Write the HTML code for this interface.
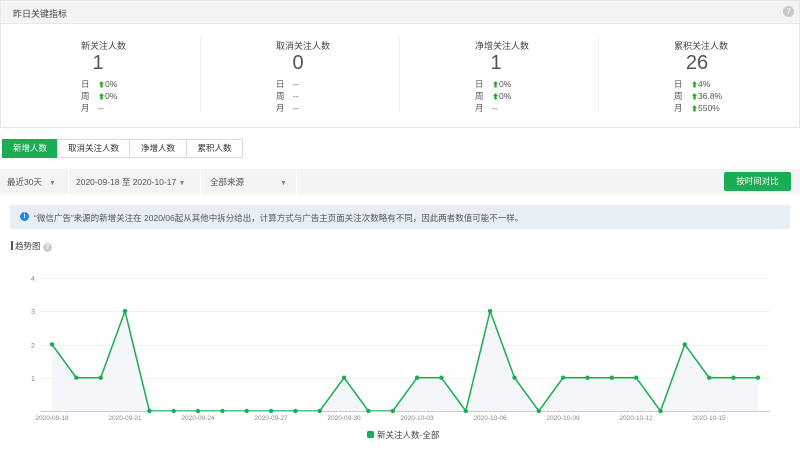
<!DOCTYPE html>
<html><head><meta charset="utf-8"><style>
*{margin:0;padding:0;box-sizing:border-box}
body{width:800px;height:469px;overflow:hidden;background:#fff;font-family:"Liberation Sans","Noto Sans CJK SC",sans-serif;color:#333;position:relative;font-size:9px}
.a{position:absolute}
.hd{left:0;top:0;width:800px;height:24px;background:#f3f4f6;border:1px solid #e7e8eb}
.cards{left:0;top:24px;width:800px;height:104px;border:1px solid #e7e8eb;border-top:none}
.dv{width:1px;height:76px;top:37px;background:#eee}
.t{font-size:9px;color:#444}
.n{font-size:20px;color:#555;text-align:center;width:30px}
.r{font-size:8.5px;color:#555}
.r div{height:12px;line-height:12px;white-space:nowrap}
.r b{display:inline-block;width:17px;font-weight:normal}
.g{color:#1aad19;font-size:7px;line-height:12px}
.tab{top:139px;height:19px;border:1px solid #ddd;font-size:8.5px;line-height:17px;text-align:center;background:#fff}
</style></head><body>
<div class="a hd"></div>
<div class="a t" style="left:13px;top:7px">昨日关键指标</div>
<div class="a" style="left:783px;top:6px;width:11px;height:11px;border-radius:50%;background:#c8c8c8;color:#fff;font-size:8px;text-align:center;line-height:11px">?</div>
<div class="a cards"></div>
<div class="a dv" style="left:200px"></div><div class="a dv" style="left:399px"></div><div class="a dv" style="left:598px"></div>

<div class="a t" style="left:81px;top:39px">新关注人数</div><div class="a n" style="left:83px;top:52px">1</div>
<div class="a r" style="left:81px;top:78px"><div><b>日</b><span class="g">⬆</span>0%</div><div><b>周</b><span class="g">⬆</span>0%</div><div><b>月</b>--</div></div>
<div class="a t" style="left:276px;top:39px">取消关注人数</div><div class="a n" style="left:283px;top:52px">0</div>
<div class="a r" style="left:276px;top:78px"><div><b>日</b>--</div><div><b>周</b>--</div><div><b>月</b>--</div></div>
<div class="a t" style="left:475px;top:39px">净增关注人数</div><div class="a n" style="left:481px;top:52px">1</div>
<div class="a r" style="left:475px;top:78px"><div><b>日</b><span class="g">⬆</span>0%</div><div><b>周</b><span class="g">⬆</span>0%</div><div><b>月</b>--</div></div>
<div class="a t" style="left:674px;top:39px">累积关注人数</div><div class="a n" style="left:680px;top:52px;width:34px">26</div>
<div class="a r" style="left:674px;top:78px"><div><b>日</b><span class="g">⬆</span>4%</div><div><b>周</b><span class="g">⬆</span>36.8%</div><div><b>月</b><span class="g">⬆</span>550%</div></div>

<div class="a tab" style="left:2px;width:56px;background:#1aad53;color:#fff;border-color:#1aad53">新增人数</div>
<div class="a tab" style="left:57px;width:73px">取消关注人数</div>
<div class="a tab" style="left:129px;width:58px">净增人数</div>
<div class="a tab" style="left:186px;width:57px">累积人数</div>

<div class="a" style="left:0;top:169px;width:800px;height:25px;background:#f3f4f6"></div>
<div class="a" style="left:68px;top:169px;width:1px;height:25px;background:#fff"></div>
<div class="a" style="left:200px;top:169px;width:1px;height:25px;background:#fff"></div>
<div class="a" style="left:296px;top:169px;width:1px;height:25px;background:#fff"></div>
<div class="a r" style="left:7px;top:176px">最近30天 &nbsp;&nbsp;<span style="color:#888;font-size:7px">▼</span></div>
<div class="a r" style="left:76px;top:176px">2020-09-18 至 2020-10-17 <span style="color:#888;font-size:7px">▼</span></div>
<div class="a r" style="left:210px;top:176px">全部来源<span style="color:#888;font-size:7px;margin-left:36px">▼</span></div>
<div class="a" style="left:724px;top:172px;width:67px;height:19px;background:#1aad53;border-radius:2px;color:#fff;font-size:8.5px;text-align:center;line-height:19px">按时间对比</div>

<div class="a" style="left:10px;top:205px;width:780px;height:24px;background:#e8eef6"></div>
<div class="a" style="left:20px;top:212px;width:9px;height:9px;border-radius:50%;background:#1e88e5;color:#fff;font-size:7px;text-align:center;line-height:9px;font-weight:bold">i</div>
<div class="a" style="left:34px;top:212px;font-size:8.5px;color:#555">“微信广告”来源的新增关注在 2020/06起从其他中拆分给出，计算方式与广告主页面关注次数略有不同，因此两者数值可能不一样。</div>

<div class="a" style="left:11px;top:241px;width:2px;height:9px;background:#555"></div>
<div class="a" style="left:15px;top:240px;font-size:8.5px;color:#444">趋势图 <span style="display:inline-block;width:9px;height:9px;border-radius:50%;background:#ccc;color:#fff;font-size:7px;text-align:center;line-height:9px">?</span></div>

<svg class="a" style="left:0;top:0" width="800" height="469">
<g stroke="#f2f2f2" stroke-width="1"><line x1="40" y1="278.5" x2="770" y2="278.5"/><line x1="40" y1="311.5" x2="770" y2="311.5"/><line x1="40" y1="345.5" x2="770" y2="345.5"/><line x1="40" y1="378.5" x2="770" y2="378.5"/></g>
<g font-size="7" fill="#888" font-family="Liberation Sans"><text x="31" y="281">4</text><text x="31" y="314">3</text><text x="31" y="348">2</text><text x="31" y="381">1</text></g>
<polygon id="ar" fill="#f4f6fa" points=""/>
<polyline id="pl" fill="none" stroke="#1aad53" stroke-width="1.5" points=""/>
<line x1="40" y1="411.5" x2="770" y2="411.5" stroke="#ccc"/>
<g id="dots" fill="#1aad53"></g>
<g font-size="6.5" fill="#888" font-family="Liberation Sans" text-anchor="middle">
<text x="52" y="420">2020-09-18</text><text x="125" y="420">2020-09-21</text><text x="198" y="420">2020-09-24</text><text x="271" y="420">2020-09-27</text><text x="344" y="420">2020-09-30</text><text x="417" y="420">2020-10-03</text><text x="490" y="420">2020-10-06</text><text x="563" y="420">2020-10-09</text><text x="636" y="420">2020-10-12</text><text x="709" y="420">2020-10-15</text></g>
<rect x="367" y="431" width="7" height="7" rx="1.5" fill="#1aad53"/>
<text x="377" y="438" font-size="8.5" fill="#444" font-family="Liberation Sans,Noto Sans CJK SC">新关注人数-全部</text>
</svg>
<script>
var d=[2,1,1,3,0,0,0,0,0,0,0,0,1,0,0,1,1,0,3,1,0,1,1,1,1,0,2,1,1,1];
var p=[],dots='';d.forEach(function(v,i){var x=52+i*24.34,y=411-v*33.3;p.push(x.toFixed(1)+','+y.toFixed(1));dots+='<circle cx="'+x.toFixed(1)+'" cy="'+y.toFixed(1)+'" r="2.2"/>';});
document.getElementById('pl').setAttribute('points',p.join(' '));
document.getElementById('ar').setAttribute('points','52,411 '+p.join(' ')+' 758,411');
document.getElementById('dots').innerHTML=dots;
</script>
</body></html>
